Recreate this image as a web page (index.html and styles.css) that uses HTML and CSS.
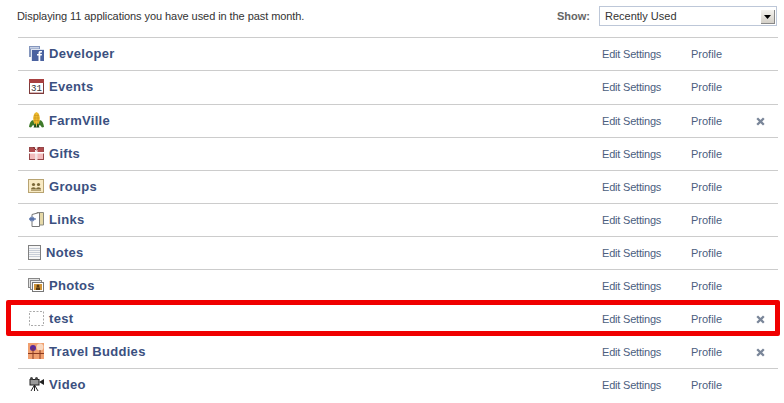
FILE: index.html
```html
<!DOCTYPE html>
<html lang="en">
<head>
<meta charset="utf-8">
<title>Applications</title>
<link rel="stylesheet" href="styles.css">
</head>
<body>
<div class="page">
  <header class="top">
    <p class="summary">Displaying 11 applications you have used in the past month.</p>
    <div class="filter">
      <span class="filter-label">Show:</span>
      <div class="select">
        <span>Recently Used</span>
        <span class="select-btn"><svg width="7" height="4" viewBox="0 0 7 4"><path d="M0 0h7L3.500 4z" fill="#000"/></svg></span>
      </div>
    </div>
  </header>
  <ul class="list">
    <li class="row">
      <a class="app"><svg class="icon" width="15" height="15" viewBox="0 0 15 15"><rect width="11" height="11" fill="#8496bd"/><rect x="1" y="1" width="9" height="1.500" fill="#c8d2e6"/><rect x="2" y="3" width="13" height="12" fill="#dfe5f0"/><rect x="3" y="4" width="12" height="11" fill="#4a62a0"/><path d="M9.500 15V9.500H8V8H9.500V6.800C9.500 5.500 10.300 5 11.500 5H13V6.500H12C11.500 6.500 11.300 6.700 11.300 7.100V8H13L12.700 9.500H11.300V15z" fill="#fff"/></svg>Developer</a>
      <a class="link edit">Edit Settings</a><a class="link profile">Profile</a>
    </li>
    <li class="row row-tall">
      <a class="app"><svg class="icon" width="15" height="15" viewBox="0 0 15 15"><rect x=".5" y=".5" width="14" height="14" fill="#fff" stroke="#7d3a3a"/><rect width="15" height="4" fill="#a84040"/><rect x="1" y="13" width="13" height="1" fill="#d8b8b8"/><text class="cal" x="7.500" y="11.500" text-anchor="middle">31</text></svg>Events</a>
      <a class="link edit">Edit Settings</a><a class="link profile">Profile</a>
    </li>
    <li class="row">
      <a class="app"><svg class="icon" width="15" height="16" viewBox="0 0 15 16"><path d="M0 15C.5 11 2 8 4.500 8L7 15 4 13 2 15.500zM15 15C14.500 11 13 8 10.500 8L8 15 11 13 13 15.500z" fill="#3f7a2a"/><path d="M7.500 0C11 1.500 11.500 7 10 11L7.500 14 5 11C3.500 7 4 1.500 7.500 0z" fill="#f0bd2e"/><path d="M5 3.500h5M4.500 6h6M5 8.500h5M6 1.500v10M9 1.500v10" stroke="#c08a1c" stroke-width=".5"/><path d="M4.500 15.500L6.500 11 7.500 15.500 8.500 11 10.500 15.500z" fill="#1f4a16"/></svg>FarmVille</a>
      <a class="link edit">Edit Settings</a><a class="link profile">Profile</a><a class="close"><svg width="9" height="9" viewBox="0 0 9 9"><path d="M1.200 1.200L7.800 7.800M7.800 1.200L1.200 7.800" stroke="#7a8699" stroke-width="2.300"/></svg></a>
    </li>
    <li class="row">
      <a class="app"><svg class="icon" width="15" height="13" viewBox="0 0 15 13"><rect x=".5" y=".5" width="14" height="12" fill="#f2bcbc" stroke="#97484a"/><rect x="1" y="1" width="13" height="4" fill="#b04a4c"/><rect x="6" width="2.500" height="13" fill="#f3e3e3"/><rect y="5" width="15" height="1.500" fill="#fff"/><path d="M7 3L4 0M7.500 3L11 0" stroke="#7d2c2e"/></svg>Gifts</a>
      <a class="link edit">Edit Settings</a><a class="link profile">Profile</a>
    </li>
    <li class="row">
      <a class="app app-wide"><svg class="icon" width="16" height="14" viewBox="0 0 16 14"><rect x=".5" y=".5" width="15" height="13" fill="#f8eac4" stroke="#b8a472"/><circle cx="5.500" cy="5.500" r="1.600" fill="#7a6838"/><circle cx="10.500" cy="5.500" r="1.600" fill="#7a6838"/><path d="M3 10.500C3 7.500 8 7.500 8 10.500zM8 10.500C8 7.500 13 7.500 13 10.500z" fill="#7a6838"/><path d="M3 11.500h10" stroke="#b8a472"/></svg>Groups</a>
      <a class="link edit">Edit Settings</a><a class="link profile">Profile</a>
    </li>
    <li class="row">
      <a class="app"><svg class="icon" width="15" height="15" viewBox="0 0 15 15"><path d="M8 .5h6.500v12.500H8z" fill="#e6d9a8" stroke="#8a8a80"/><path d="M3 2.500L10.500 .5v14H3z" fill="#fff" stroke="#777"/><circle cx="3" cy="7" r="2.500" fill="#7a90bc"/><path d="M0 7h7" stroke="#3b5998"/></svg>Links</a>
      <a class="link edit">Edit Settings</a><a class="link profile">Profile</a>
    </li>
    <li class="row">
      <a class="app app-notes"><svg class="icon" width="13" height="15" viewBox="0 0 13 15"><rect x=".5" y=".5" width="12" height="14" fill="#f6f6f6" stroke="#808080"/><path d="M1 3.500h11M1 5.500h11M1 7.500h11M1 9.500h11M1 11.500h11" stroke="#c8ced8"/></svg>Notes</a>
      <a class="link edit">Edit Settings</a><a class="link profile">Profile</a>
    </li>
    <li class="row">
      <a class="app app-wide"><svg class="icon" width="16" height="14" viewBox="0 0 16 14"><rect x=".5" y=".5" width="11" height="9" fill="#e4e4e4" stroke="#888"/><rect x="2.500" y="2.500" width="11" height="9" fill="#eee" stroke="#888"/><rect x="4.500" y="4.500" width="11" height="9" fill="#fff" stroke="#777"/><rect x="6" y="6" width="8" height="6" fill="#d09438"/><circle cx="10" cy="8" r="1.500" fill="#5a3a10"/><rect x="8" y="9.500" width="4" height="2.500" fill="#5a3a10"/></svg>Photos</a>
      <a class="link edit">Edit Settings</a><a class="link profile">Profile</a>
    </li>
    <li class="row">
      <a class="app"><svg class="icon" width="15" height="15" viewBox="0 0 15 15"><rect x=".5" y=".5" width="14" height="14" fill="none" stroke="#aaa" stroke-dasharray="2 1.500"/></svg>test</a>
      <a class="link edit">Edit Settings</a><a class="link profile">Profile</a><a class="close"><svg width="9" height="9" viewBox="0 0 9 9"><path d="M1.200 1.200L7.800 7.800M7.800 1.200L1.200 7.800" stroke="#7a8699" stroke-width="2.300"/></svg></a>
    </li>
    <li class="row">
      <a class="app app-wide"><svg class="icon" width="16" height="16" viewBox="0 0 16 16"><rect width="16" height="16" fill="#f0a070"/><circle cx="12" cy="4" r="3.500" fill="#f8d8c0"/><circle cx="5" cy="5" r="3" fill="#5a2a9a"/><path d="M5 5v11M12 7v9M0 10.500h16" stroke="#8a3a20"/></svg>Travel Buddies</a>
      <a class="link edit">Edit Settings</a><a class="link profile">Profile</a><a class="close"><svg width="9" height="9" viewBox="0 0 9 9"><path d="M1.200 1.200L7.800 7.800M7.800 1.200L1.200 7.800" stroke="#7a8699" stroke-width="2.300"/></svg></a>
    </li>
    <li class="row">
      <a class="app"><svg class="icon" width="15" height="14" viewBox="0 0 15 14"><rect x="1" y="2.500" width="9" height="5.500" fill="#999" stroke="#222"/><circle cx="2.500" cy="1.500" r="1.500" fill="#444"/><circle cx="7.500" cy="1.500" r="1.500" fill="#444"/><path d="M10 5l5-3v6z" fill="#222"/><path d="M5.500 8L2 14M5.500 8v6M5.500 8l3.500 6" stroke="#222"/></svg>Video</a>
      <a class="link edit">Edit Settings</a><a class="link profile">Profile</a>
    </li>
  </ul>
  <div class="highlight"></div>
</div>
</body>
</html>
```
FILE: styles.css
```css
* { box-sizing: border-box; }
html, body { margin: 0; padding: 0; background: #fff; overflow: hidden; }
body { font-family: "Liberation Sans", Arial, sans-serif; font-size: 11px; color: #333; }
.page { position: relative; width: 784px; height: 403px; padding: 6px 7px 0 17px; }
.top { display: flex; justify-content: space-between; align-items: center; height: 20px; margin-bottom: 11px; }
.summary { margin: 0; font-size: 11px; letter-spacing: -.07px; }
.filter { display: flex; align-items: center; gap: 9px; }
.filter-label { font-weight: bold; color: #666; }
.select { width: 178px; height: 20px; border: 1px solid #bdc7d8; display: flex; align-items: center; justify-content: space-between; padding: 2px 1px 0 5px; color: #333; font-size: 11px; }
.select-btn { width: 14px; height: 14px; background: linear-gradient(#f4f2ee, #d4d0c8); border-right: 1px solid #888; border-bottom: 1px solid #888; display: flex; align-items: center; justify-content: center; }
.select span:first-child { margin-top: -2px; }
.list { list-style: none; margin: 0 0 0 1px; padding: 0; width: 760px; }
.row { display: flex; align-items: center; height: 33px; border-top: 1px solid #ccc; padding-left: 11px; }
.row-tall { height: 34px; padding-bottom: 1px; }
.app { display: flex; align-items: center; gap: 5px; width: 573px; padding-bottom: 2px; font-size: 13px; font-weight: bold; color: #3b5080; letter-spacing: .3px; white-space: nowrap; }
.app-wide { margin-left: -1px; width: 574px; }
.app-notes { margin-left: -1px; width: 574px; }
.icon { flex: none; }
.cal { font-family: "Liberation Mono", monospace; font-size: 9px; font-weight: normal; fill: #333; letter-spacing: 0; }
.link { color: #4b5e80; font-size: 11px; }
.edit { width: 89px; letter-spacing: -.2px; }
.profile { width: 65px; }
.close { display: flex; }
.highlight { position: absolute; left: 6px; top: 300px; width: 774px; height: 36px; border: 5px solid #f00000; border-radius: 2px; }
```
